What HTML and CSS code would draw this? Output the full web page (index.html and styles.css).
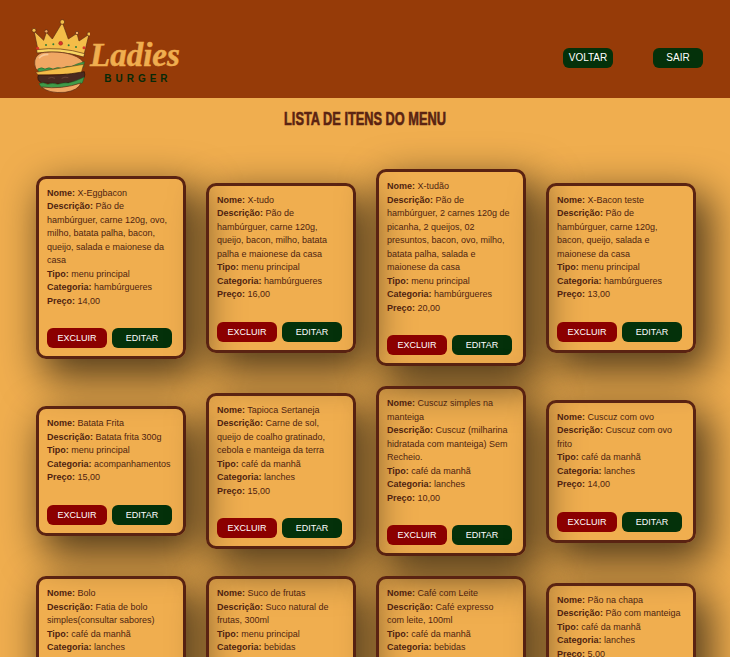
FILE: index.html
```html
<!doctype html>
<html lang="pt-BR">
    <head>
        <meta charset="UTF-8" />
        <title>Lista de itens do menu</title>
        <link rel="stylesheet" href="styles.css">
    </head>
    <body>
        <header class="topo">
            <div class="logo">
                <svg class="logo-burger" width="60" height="80" viewBox="15 0 180 240">
                    <!-- coroa -->
                    <g stroke="#5a2a12" stroke-width="2">
                        <path d="M40 110 L27 48 L56 76 L64 52 L82 72 L112 22 L130 72 L156 55 L162 78 L192 58 L176 124 Q105 100 40 110 Z" fill="#f4bd48"/>
                        <path d="M35 104 Q105 94 179 116 L176 126 Q105 104 36 114 Z" fill="#f9d562"/>
                        <circle cx="27" cy="46" r="6" fill="#f4bd48"/>
                        <circle cx="64" cy="49" r="5" fill="#f0a860"/>
                        <circle cx="112" cy="21" r="7" fill="#f4bd48"/>
                        <circle cx="156" cy="54" r="5" fill="#f0a860"/>
                        <circle cx="192" cy="57" r="6" fill="#f4bd48"/>
                    </g>
                    <circle cx="107" cy="85" r="6" fill="#d8342a" stroke="#7a1a10"/>
                    <circle cx="38" cy="100" r="4.5" fill="#d8342a"/>
                    <circle cx="177" cy="98" r="4.5" fill="#d8342a"/>
                    <circle cx="63" cy="90" r="3" fill="#2f7d3a"/>
                    <circle cx="85" cy="88" r="3" fill="#2f7d3a"/>
                    <circle cx="131" cy="91" r="3" fill="#2f7d3a"/>
                    <circle cx="153" cy="96" r="3" fill="#2f7d3a"/>
                    <!-- pao de cima -->
                    <path d="M32 160 C20 125 45 110 65 112 C105 108 155 116 174 140 L172 150 Q110 170 40 168 Z" fill="#f0a763" stroke="#5a2a12" stroke-width="2"/>
                    <path d="M42 130 Q50 118 70 118" fill="none" stroke="#f8c896" stroke-width="5"/>
                    <!-- alface, tomate, queijo -->
                    <path d="M38 162 Q50 155 60 162 Q72 155 84 162 Q98 154 110 160 Q125 152 140 154 Q155 146 178 140 L176 156 Q110 178 42 172 Z" fill="#3f9a48" stroke="#1f5a26" stroke-width="1.5"/>
                    <path d="M75 170 L150 158 L130 172 Z" fill="#c8302a"/>
                    <path d="M32 172 L176 148 L168 176 L140 188 L122 178 L40 180 Z" fill="#f4bd48" stroke="#5a2a12" stroke-width="1.5"/>
                    <!-- carne -->
                    <path d="M40 180 Q100 184 178 170 Q184 190 165 198 Q110 210 50 204 Q34 195 40 180 Z" fill="#4a2a20" stroke="#2a1208" stroke-width="2"/>
                    <path d="M70 190 Q80 184 90 190 M110 190 Q120 184 130 188" fill="none" stroke="#7a5040" stroke-width="2"/>
                    <!-- alface e pao de baixo -->
                    <path d="M42 206 Q55 200 68 208 Q84 202 98 208 Q115 202 130 204 Q150 200 178 186 L172 204 Q110 226 50 218 Z" fill="#3f9a48" stroke="#1f5a26" stroke-width="1.5"/>
                    <path d="M50 216 Q110 224 168 204 Q160 226 120 232 Q70 236 50 216 Z" fill="#f0a763" stroke="#5a2a12" stroke-width="2"/>
                </svg>
                <div class="logo-texto">
                    <span class="logo-ladies">Ladies</span>
                    <span class="logo-burger-txt">BURGER</span>
                </div>
            </div>
            <nav class="topo-botoes">
                <a class="btn-topo" href="#">VOLTAR</a>
                <a class="btn-topo" href="#">SAIR</a>
            </nav>
        </header>

        <h1 class="titulo"><span>LISTA DE ITENS DO MENU</span></h1>

        <!-- Lista de itens -->
        <main class="lista">
            <div class="card">
                <p><b>Nome:</b> X-Eggbacon</p>
                <p><b>Descrição:</b> Pão de hambúrguer, carne 120g, ovo, milho, batata palha, bacon, queijo, salada e maionese da casa</p>
                <p><b>Tipo:</b> menu principal</p>
                <p><b>Categoria:</b> hambúrgueres</p>
                <p><b>Preço:</b> 14,00</p>
                <div class="acoes"><button class="excluir">EXCLUIR</button><button class="editar">EDITAR</button></div>
            </div>
            <div class="card">
                <p><b>Nome:</b> X-tudo</p>
                <p><b>Descrição:</b> Pão de hambúrguer, carne 120g, queijo, bacon, milho, batata palha e maionese da casa</p>
                <p><b>Tipo:</b> menu principal</p>
                <p><b>Categoria:</b> hambúrgueres</p>
                <p><b>Preço:</b> 16,00</p>
                <div class="acoes"><button class="excluir">EXCLUIR</button><button class="editar">EDITAR</button></div>
            </div>
            <div class="card">
                <p><b>Nome:</b> X-tudão</p>
                <p><b>Descrição:</b> Pão de hambúrguer, 2 carnes 120g de picanha, 2 queijos, 02 presuntos, bacon, ovo, milho, batata palha, salada e maionese da casa</p>
                <p><b>Tipo:</b> menu principal</p>
                <p><b>Categoria:</b> hambúrgueres</p>
                <p><b>Preço:</b> 20,00</p>
                <div class="acoes"><button class="excluir">EXCLUIR</button><button class="editar">EDITAR</button></div>
            </div>
            <div class="card">
                <p><b>Nome:</b> X-Bacon teste</p>
                <p><b>Descrição:</b> Pão de hambúrguer, carne 120g, bacon, queijo, salada e maionese da casa</p>
                <p><b>Tipo:</b> menu principal</p>
                <p><b>Categoria:</b> hambúrgueres</p>
                <p><b>Preço:</b> 13,00</p>
                <div class="acoes"><button class="excluir">EXCLUIR</button><button class="editar">EDITAR</button></div>
            </div>
            <div class="card">
                <p><b>Nome:</b> Batata Frita</p>
                <p><b>Descrição:</b> Batata frita 300g</p>
                <p><b>Tipo:</b> menu principal</p>
                <p><b>Categoria:</b> acompanhamentos</p>
                <p><b>Preço:</b> 15,00</p>
                <div class="acoes"><button class="excluir">EXCLUIR</button><button class="editar">EDITAR</button></div>
            </div>
            <div class="card">
                <p><b>Nome:</b> Tapioca Sertaneja</p>
                <p><b>Descrição:</b> Carne de sol, queijo de coalho gratinado, cebola e manteiga da terra</p>
                <p><b>Tipo:</b> café da manhã</p>
                <p><b>Categoria:</b> lanches</p>
                <p><b>Preço:</b> 15,00</p>
                <div class="acoes"><button class="excluir">EXCLUIR</button><button class="editar">EDITAR</button></div>
            </div>
            <div class="card">
                <p><b>Nome:</b> Cuscuz simples na manteiga</p>
                <p><b>Descrição:</b> Cuscuz (milharina hidratada com manteiga) Sem Recheio.</p>
                <p><b>Tipo:</b> café da manhã</p>
                <p><b>Categoria:</b> lanches</p>
                <p><b>Preço:</b> 10,00</p>
                <div class="acoes"><button class="excluir">EXCLUIR</button><button class="editar">EDITAR</button></div>
            </div>
            <div class="card">
                <p><b>Nome:</b> Cuscuz com ovo</p>
                <p><b>Descrição:</b> Cuscuz com ovo frito</p>
                <p><b>Tipo:</b> café da manhã</p>
                <p><b>Categoria:</b> lanches</p>
                <p><b>Preço:</b> 14,00</p>
                <div class="acoes"><button class="excluir">EXCLUIR</button><button class="editar">EDITAR</button></div>
            </div>
            <div class="card">
                <p><b>Nome:</b> Bolo</p>
                <p><b>Descrição:</b> Fatia de bolo simples(consultar sabores)</p>
                <p><b>Tipo:</b> café da manhã</p>
                <p><b>Categoria:</b> lanches</p>
                <p><b>Preço:</b> 8,00</p>
                <div class="acoes"><button class="excluir">EXCLUIR</button><button class="editar">EDITAR</button></div>
            </div>
            <div class="card">
                <p><b>Nome:</b> Suco de frutas</p>
                <p><b>Descrição:</b> Suco natural de frutas, 300ml</p>
                <p><b>Tipo:</b> menu principal</p>
                <p><b>Categoria:</b> bebidas</p>
                <p><b>Preço:</b> 7,00</p>
                <div class="acoes"><button class="excluir">EXCLUIR</button><button class="editar">EDITAR</button></div>
            </div>
            <div class="card">
                <p><b>Nome:</b> Café com Leite</p>
                <p><b>Descrição:</b> Café expresso com leite, 100ml</p>
                <p><b>Tipo:</b> café da manhã</p>
                <p><b>Categoria:</b> bebidas</p>
                <p><b>Preço:</b> 5,00</p>
                <div class="acoes"><button class="excluir">EXCLUIR</button><button class="editar">EDITAR</button></div>
            </div>
            <div class="card">
                <p><b>Nome:</b> Pão na chapa</p>
                <p><b>Descrição:</b> Pão com manteiga</p>
                <p><b>Tipo:</b> café da manhã</p>
                <p><b>Categoria:</b> lanches</p>
                <p><b>Preço:</b> 5,00</p>
                <div class="acoes"><button class="excluir">EXCLUIR</button><button class="editar">EDITAR</button></div>
            </div>
        </main>
    </body>
</html>
```
FILE: styles.css
```css
body {
    font-family: "Liberation Sans", Arial, sans-serif;
    background-color: #f0ae4f;
    margin: 0;
    padding: 0;
    height: 657px;
    overflow: hidden;
}

/* Topo da pagina */
.topo {
    background-color: #963b08;
    height: 98px;
    display: flex;
    align-items: flex-start;
    justify-content: space-between;
    padding: 15px 27px 0 30px;
    box-sizing: border-box;
}

.logo {
    display: flex;
    align-items: flex-start;
}

.logo-texto {
    display: flex;
    flex-direction: column;
    align-items: center;
    padding-top: 22px;
}

.logo-ladies {
    font-family: "Liberation Serif", serif;
    font-style: italic;
    font-weight: bold;
    font-size: 33px;
    line-height: 36px;
    color: #f0ae4f;
    -webkit-text-stroke: 0.5px #f0ae4f;
}

.logo-burger-txt {
    font-weight: bold;
    font-size: 10px;
    line-height: 12px;
    letter-spacing: 4px;
    padding-left: 6px;
    color: #062a08;
}

.topo-botoes {
    display: flex;
    gap: 40px;
    margin-top: 33px;
}

.btn-topo {
    width: 50px;
    height: 20px;
    line-height: 20px;
    text-align: center;
    background-color: #04310a;
    color: #fff;
    font-size: 10px;
    border-radius: 6px;
    text-decoration: none;
}

/* sem Impact na maquina, entao estreita a fonte */
.titulo {
    font-size: 18px;
    line-height: 18px;
    font-weight: bold;
    color: #5a2312;
    text-align: center;
    margin: 12px 0 0;
}

.titulo span {
    display: inline-block;
    transform: scaleX(0.71);
    -webkit-text-stroke: 0.6px #5a2312;
}

/* Cards do menu */
.lista {
    display: grid;
    grid-template-columns: repeat(4, 150px);
    gap: 20px;
    align-items: center;
    padding: 41px 0 0 36px;
}

.card {
    box-sizing: border-box;
    border: 3px solid #5a2312;
    border-radius: 10px;
    padding: 8px 10px 8px 8px;
    box-shadow: 10px 15px 40px 4px rgba(0, 0, 0, 0.65);
    font-size: 9px;
    line-height: 13.5px;
    color: #4f1f10;
}

.card p {
    margin: 0;
}

.acoes {
    display: flex;
    gap: 5px;
    margin-top: 20px;
}

.acoes button {
    width: 60px;
    height: 20px;
    border: none;
    border-radius: 6px;
    color: #fff;
    font-family: "Liberation Sans", Arial, sans-serif;
    font-size: 9px;
    padding: 0;
}

.excluir {
    background-color: #8b0000;
}

.editar {
    background-color: #04310a;
}
```
